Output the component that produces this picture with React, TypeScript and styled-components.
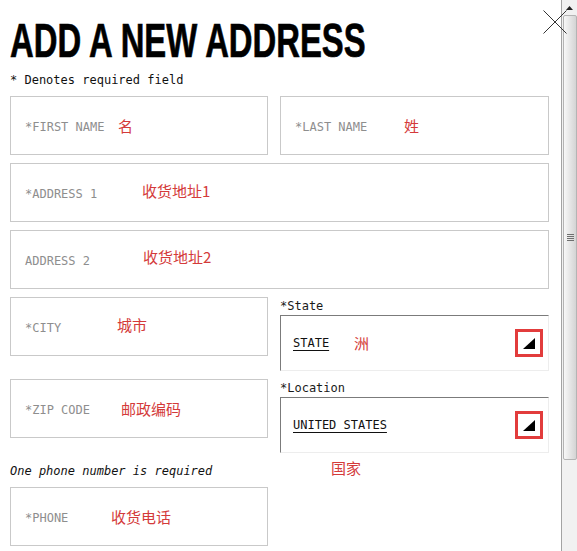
import React from "react";
import styled, { createGlobalStyle } from "styled-components";

const GlobalStyle = createGlobalStyle`
  html, body {
    margin: 0;
    padding: 0;
    background: #fff;
  }
  body {
    font-family: "DejaVu Sans Mono", monospace;
  }
`;

const Page = styled.div`
  position: relative;
  display: flex;
  width: 577px;
  height: 551px;
  overflow: hidden;
  background: #fff;
`;

const Main = styled.div`
  width: 539px;
  flex: none;
  padding: 0 12px 0 10px;
  display: flex;
  flex-direction: column;
`;

const Title = styled.h1`
  margin: 16px 0 0;
  font-family: "Liberation Sans", Arial, sans-serif;
  font-weight: 700;
  font-size: 49px;
  line-height: 49px;
  color: #000;
  white-space: nowrap;
  -webkit-text-stroke: 0.7px #000;
  transform: scaleX(0.67);
  transform-origin: left center;
`;

const Required = styled.p`
  margin: 8px 0 9px;
  font-family: "DejaVu Sans Mono", monospace;
  font-size: 12px;
  line-height: 14px;
  color: #111;
`;

const Form = styled.div`
  display: flex;
  flex-direction: column;
  gap: 8px;
`;

const Row = styled.div`
  display: grid;
  grid-template-columns: 258px 269px;
  column-gap: 12px;
  align-items: start;
`;

const Column = styled.div<{ $gap: number }>`
  display: flex;
  flex-direction: column;
  gap: ${(p) => p.$gap}px;
`;

const Field = styled.div`
  height: 59px;
  box-sizing: border-box;
  border: 1px solid #c9c9c9;
  display: flex;
  align-items: center;
  padding: 2px 14px 0;
`;

const Placeholder = styled.span<{ $w: number }>`
  width: ${(p) => p.$w}px;
  flex: none;
  font-family: "DejaVu Sans Mono", monospace;
  font-size: 12px;
  color: #8e8e8e;
  white-space: nowrap;
`;

// annotation text; $lift raises it a few pixels without growing its row
const Note = styled.span<{ $lift?: number; $indent?: number }>`
  font-family: "Noto Sans CJK SC", sans-serif;
  font-size: 15px;
  line-height: 18px;
  color: #d43a3a;
  white-space: nowrap;
  margin-top: ${(p) => -(p.$lift ?? 0) * 2}px;
  padding-left: ${(p) => p.$indent ?? 0}px;
`;

const Label = styled.div<{ $top?: number }>`
  height: 18px;
  margin-top: ${(p) => p.$top ?? 0}px;
  font-family: "DejaVu Sans Mono", monospace;
  font-size: 12px;
  line-height: 18px;
  color: #1a1a1a;
`;

const Select = styled.div`
  height: 56px;
  box-sizing: border-box;
  border-top: 1px solid #7b7b7b;
  border-left: 1px solid #7b7b7b;
  border-right: 1px solid #ededed;
  border-bottom: 1px solid #ededed;
  display: flex;
  align-items: center;
  padding: 0 5px 0 12px;
`;

const SelectValue = styled.span<{ $w?: number }>`
  ${(p) => (p.$w ? `width: ${p.$w}px; flex: none;` : "")}
  font-family: "DejaVu Sans Mono", monospace;
  font-size: 12px;
  color: #111;
  text-decoration: underline;
  text-underline-offset: 3px;
  white-space: nowrap;
`;

const ArrowBox = styled.span`
  margin-left: auto;
  width: 28px;
  height: 28px;
  box-sizing: border-box;
  border: 3px solid #e23c3c;
  display: flex;
  align-items: center;
  justify-content: center;
`;

const PhoneHint = styled.span`
  font-family: "DejaVu Sans Mono", monospace;
  font-size: 12px;
  line-height: 18px;
  font-style: italic;
  color: #111;
`;

const HintRow = styled(Row)`
  margin: 1px 0 -1px;
  height: 18px;
  align-items: center;
`;

const Close = styled.button`
  position: absolute;
  top: 10px;
  right: 10px;
  width: 24px;
  height: 24px;
  padding: 0;
  border: none;
  background: transparent;
  display: flex;
`;

const Scrollbar = styled.div`
  width: 16px;
  flex: none;
  box-sizing: border-box;
  border-left: 1px solid #a3a3a3;
  background: #f1f1f1;
  display: flex;
  flex-direction: column;
`;

const ScrollArrow = styled.div`
  height: 15px;
  display: flex;
  align-items: center;
  justify-content: center;
`;

const Thumb = styled.div`
  height: 445px;
  margin: 0 0 0 1px;
  box-sizing: border-box;
  border: 1px solid #b4b4b4;
  border-radius: 2px;
  background: linear-gradient(to right, #f7f7f7, #e2e2e2 60%, #d4d4d4);
  display: flex;
  flex-direction: column;
  align-items: center;
  justify-content: center;
  gap: 1px;
`;

const Grip = styled.span`
  width: 7px;
  height: 1px;
  background: #6f6f6f;
`;

function Arrow() {
  return (
    <ArrowBox>
      <svg width="12" height="11" viewBox="0 0 12 11">
        <polygon points="12,0 12,11 0,11" fill="#000" />
      </svg>
    </ArrowBox>
  );
}

export default function App() {
  return (
    <Page>
      <GlobalStyle />
      <Main>
        <Title>ADD A NEW ADDRESS</Title>
        <Required>* Denotes required field</Required>

        <Form>
          <Row>
            <Field>
              <Placeholder $w={93}>*FIRST NAME</Placeholder>
              <Note $lift={1}>名</Note>
            </Field>
            <Field>
              <Placeholder $w={109}>*LAST NAME</Placeholder>
              <Note $lift={1}>姓</Note>
            </Field>
          </Row>

          <Field>
            <Placeholder $w={117}>*ADDRESS 1</Placeholder>
            <Note $lift={3}>收货地址1</Note>
          </Field>

          <Field>
            <Placeholder $w={118}>ADDRESS 2</Placeholder>
            <Note $lift={4}>收货地址2</Note>
          </Field>

          <Row>
            <Column $gap={23}>
              <Field>
                <Placeholder $w={92}>*CITY</Placeholder>
                <Note $lift={3}>城市</Note>
              </Field>
              <Field>
                <Placeholder $w={96}>*ZIP CODE</Placeholder>
                <Note $lift={1}>邮政编码</Note>
              </Field>
            </Column>
            <Column $gap={0}>
              <Label>*State</Label>
              <Select>
                <SelectValue $w={61}>STATE</SelectValue>
                <Note>洲</Note>
                <Arrow />
              </Select>
              <Label $top={8}>*Location</Label>
              <Select>
                <SelectValue>UNITED STATES</SelectValue>
                <Arrow />
              </Select>
            </Column>
          </Row>

          <HintRow>
            <PhoneHint>One phone number is required</PhoneHint>
            <Note $indent={51} $lift={3}>国家</Note>
          </HintRow>

          <Row>
            <Field>
              <Placeholder $w={86}>*PHONE</Placeholder>
              <Note $lift={1}>收货电话</Note>
            </Field>
          </Row>
        </Form>
      </Main>

      <Scrollbar>
        <ScrollArrow>
          <svg width="7" height="4" viewBox="0 0 7 4">
            <polygon points="3.5,0 7,4 0,4" fill="#222" />
          </svg>
        </ScrollArrow>
        <Thumb>
          <Grip />
          <Grip />
          <Grip />
          <Grip />
        </Thumb>
      </Scrollbar>

      <Close aria-label="Close">
        <svg width="24" height="24" viewBox="0 0 24 24">
          <line x1="0.5" y1="0.5" x2="23.5" y2="23.5" stroke="#333" strokeWidth="1" />
          <line x1="23.5" y1="0.5" x2="0.5" y2="23.5" stroke="#333" strokeWidth="1" />
        </svg>
      </Close>
    </Page>
  );
}
